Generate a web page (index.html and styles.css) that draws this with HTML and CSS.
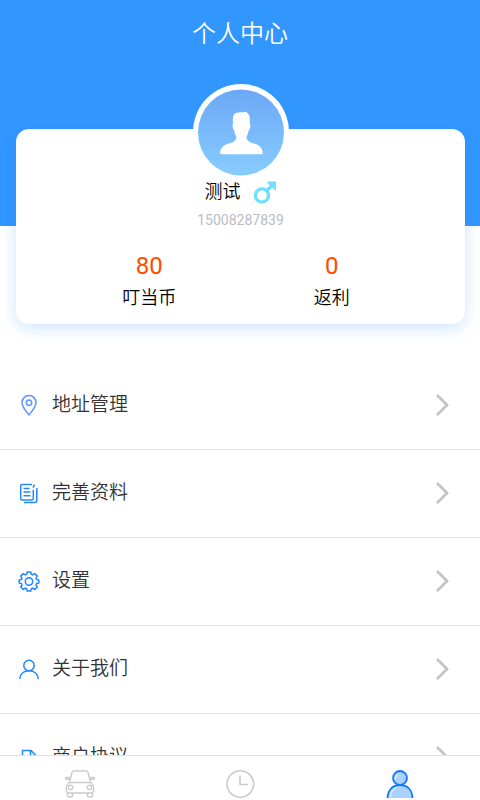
FILE: index.html
```html
<!DOCTYPE html>
<html lang="zh-CN">
<head>
<meta charset="utf-8">
<meta name="viewport" content="width=device-width, initial-scale=1">
<title>个人中心</title>
<link rel="stylesheet" href="styles.css">
</head>
<body>
<main class="content">
  <header class="banner"><h1 class="title">个人中心</h1></header>
  <section class="card">
    <svg class="avatar" viewBox="0 0 96 96" role="img" aria-label="头像">
      <defs><linearGradient id="sky" x1="0" y1="0" x2="0" y2="1"><stop offset="0" stop-color="#6ca8f7"/><stop offset="1" stop-color="#87ccff"/></linearGradient></defs>
      <circle cx="48" cy="48" r="48" fill="#fff"/>
      <circle cx="48" cy="48.500" r="43" fill="url(#sky)"/>
      <path fill="#fff" d="M40 34c0-4 3-5.500 7-5.700 2.500-.1 4.500-.2 6-.9l1.300 1.500c2 1.400 2.500 3.500 2.500 6.100v4.500c.6.500.7 1.200.5 2.500-.2 2.300-.6 3.600-1.600 4-.3 2.700-.9 4.800-2.200 6.500v2c1.300 2.800 3.500 4 7.200 5 5.200 1.400 8.700 4 9 9.300.1 1-.4 1.400-1.400 1.400H28.400c-1 0-1.400-.5-1.300-1.400.5-5.300 3.800-7.900 9-9.300 3.700-1 5.900-2.200 7.200-5v-2c-1.300-1.700-1.800-3.800-2.100-6.500-1-.4-1.400-1.700-1.600-4-.2-1.300 0-2 .5-2.500-.3-1.800-.3-3.700-.1-5.500z"/>
    </svg>
    <div class="person">
      <span class="name">测试</span>
      <svg class="gender" viewBox="0 0 24 24" role="img" aria-label="男" fill="none" stroke="#6fdfff" stroke-width="3.400"><circle cx="9" cy="15.500" r="6.600"/><path d="M13.700 10.800L20 4.500"/><path d="M14.500 2h8v8l-3-2.500-2.500-2.500z" fill="#6fdfff" stroke-width="1"/></svg>
    </div>
    <div class="phone">15008287839</div>
    <dl class="stats">
      <div class="stat"><dt>叮当币</dt><dd>80</dd></div>
      <div class="stat"><dt>返利</dt><dd>0</dd></div>
    </dl>
  </section>
  <nav class="menu" aria-label="个人菜单">
    <a class="row" href="#address">
      <svg class="icon" viewBox="0 0 22 22" stroke="#5c95ff"><path d="M11 21C8 17.500 4 13 4 8.600a7 7 0 0 1 14 0C18 13 14 17.500 11 21z"/><circle cx="11" cy="8.700" r="2.700"/></svg>
      <span class="label">地址管理</span>
      <svg class="arrow" viewBox="0 0 14 22"><path d="M2 1l10 10L2 21"/></svg>
    </a>
    <a class="row" href="#profile">
      <svg class="icon" viewBox="0 0 22 22" stroke="#2386ff"><path d="M14 2.500H4.200a1.500 1.500 0 0 0-1.500 1.500v12.500A1.500 1.500 0 0 0 4.200 18h9.600a1.500 1.500 0 0 0 1.500-1.500V8M5.500 6.500h6M5.500 10h7M5.500 13.700h7M16.500 2.700l-1.500 3M18.800 6v12.500c0 1.200-.7 2-2 2H6"/></svg>
      <span class="label">完善资料</span>
      <svg class="arrow" viewBox="0 0 14 22"><path d="M2 1l10 10L2 21"/></svg>
    </a>
    <a class="row" href="#settings">
      <svg class="icon" viewBox="0 0 22 22" stroke="#2386ff"><path d="M8.700 4.300L9.200 2h3.600l.5 2.300 1.500.6 2-1.300 2.500 2.500-1.300 2 .6 1.400 2.200.5v3l-2.200.5-.6 1.500 1.300 2-2.500 2.500-2-1.300-1.500.6-.5 2.200H9.200l-.5-2.200-1.500-.6-2 1.300L2.700 17 4 15l-.6-1.500-2.200-.5v-3l2.200-.5L4 8.100l-1.300-2 2.500-2.500 2 1.300z" stroke-linejoin="round"/><circle cx="11" cy="11.500" r="3.700"/></svg>
      <span class="label">设置</span>
      <svg class="arrow" viewBox="0 0 14 22"><path d="M2 1l10 10L2 21"/></svg>
    </a>
    <a class="row" href="#about">
      <svg class="icon" viewBox="0 0 22 22" stroke="#2386ff"><circle cx="11" cy="7.500" r="5.200"/><path d="M1.700 20.800c.7-4.900 4.300-8.100 9.300-8.100s8.600 3.200 9.300 8.100"/></svg>
      <span class="label">关于我们</span>
      <svg class="arrow" viewBox="0 0 14 22"><path d="M2 1l10 10L2 21"/></svg>
    </a>
    <a class="row" href="#agreement">
      <svg class="icon" viewBox="0 0 22 22" stroke="#2386ff"><path d="M4.500 4.500H13l4.500 4.500v12h-13zM12.500 4.500v5h5"/></svg>
      <span class="label">商户协议</span>
      <svg class="arrow" viewBox="0 0 14 22"><path d="M2 1l10 10L2 21"/></svg>
    </a>
  </nav>
</main>
<nav class="tabs" aria-label="主导航">
  <a class="tab" href="#car" aria-label="用车">
    <svg class="tab-icon" viewBox="0 0 32 32" fill="none" stroke="#cbcbcb" stroke-width="1.400"><path d="M5.500 14L8 4.500c.3-1 .9-1.500 2-1.500h12c1.100 0 1.700.5 2 1.500l2.500 9.500M5.500 14.500h21c2.300 1.200 3.200 3.500 3.200 6.500 0 2.500-.7 4-2.200 4h-23c-1.500 0-2.200-1.500-2.200-4 0-3 .9-5.300 3.200-6.500zM6 9.500H2.500c-1 0-1 1.800 0 1.800h3M26 9.500h3.500c1 0 1 1.800 0 1.800h-3M3.500 25v2.500c0 1 .4 1.500 1.300 1.500h2.400c.9 0 1.300-.5 1.300-1.500V25M23.500 25v2.500c0 1 .4 1.500 1.300 1.500h2.400c.9 0 1.300-.5 1.300-1.500V25"/><circle cx="6.500" cy="19.300" r="2.200"/><circle cx="25.500" cy="19.300" r="2.200"/></svg>
  </a>
  <a class="tab" href="#orders" aria-label="订单">
    <svg class="tab-icon" viewBox="0 0 32 32" fill="none" stroke="#cbcbcb" stroke-width="1.600"><circle cx="16.300" cy="16" r="13.300"/><path d="M16 7.500v9h8"/></svg>
  </a>
  <a class="tab" href="#me" aria-label="我的" aria-current="page">
    <svg class="tab-icon" viewBox="0 0 32 32" fill="#abd2ff" stroke="#117aff" stroke-width="1.800"><path d="M3.500 30c.3-8 5-13 12.500-13s12.200 5 12.500 13"/><circle cx="16" cy="10" r="7"/><path d="M6.500 29c.3-5 2.500-8 6-9.500M11.500 11c0-2.500 1.200-4 3-4.500" fill="none" stroke="#fff" stroke-width="1"/></svg>
  </a>
</nav>
</body>
</html>
```
FILE: styles.css
```css
* {
  box-sizing: border-box;
}

body {
  margin: 0;
  height: 100vh;
  display: flex;
  flex-direction: column;
  background: #fff;
  color: #000;
  font-family: Roboto, "Noto Sans CJK SC", sans-serif;
}

a {
  color: inherit;
  text-decoration: none;
}

.content {
  flex: 1;
  min-height: 0;
  overflow-y: auto;
  scrollbar-width: none;
}

.banner {
  height: 226px;
  padding-top: 16px;
  background: #3296ff;
}

.title {
  margin: 0;
  color: #fff;
  font-size: 24px;
  font-weight: 350;
  line-height: 36px;
  text-align: center;
}

.card {
  display: flex;
  flex-direction: column;
  align-items: center;
  height: 195px;
  margin: -97px 15px 38px 16px;
  border-radius: 13px;
  background: #fff;
  box-shadow: 0 4px 16px rgba(30, 130, 255, 0.22);
}

.avatar {
  flex: none;
  width: 96px;
  height: 96px;
  margin-top: -45px;
}

.person {
  display: flex;
  align-items: center;
  gap: 12px;
  height: 24px;
}

.name {
  font-size: 18px;
  font-weight: 350;
  line-height: 24px;
}

.gender {
  width: 24px;
  height: 24px;
}

.phone {
  margin-top: 8px;
  color: #b8bcc4;
  font-size: 14px;
  line-height: 16px;
}

.stats {
  display: flex;
  align-self: stretch;
  margin: 24px 42px 0;
}

.stat {
  flex: 1;
  display: flex;
  flex-direction: column-reverse;
  align-items: center;
  gap: 4px;
}

.stat dt {
  font-size: 18px;
  font-weight: 350;
  line-height: 28px;
}

.stat dd {
  margin: 0;
  color: #ff4a00;
  font-size: 24px;
  line-height: 28px;
}

.row {
  display: flex;
  align-items: center;
  height: 88px;
  padding: 0 31px 2px 18px;
  border-bottom: 1px solid #e2e2e2;
}

.icon {
  width: 22px;
  height: 22px;
  fill: none;
  stroke-width: 1.5;
}

.label {
  flex: 1;
  margin-left: 12px;
  color: #333;
  font-size: 19px;
  font-weight: 350;
  line-height: 28px;
}

.arrow {
  width: 14px;
  height: 22px;
  fill: none;
  stroke: #c4c4c4;
  stroke-width: 2.8;
}

.tabs {
  flex: none;
  display: flex;
  height: 45px;
  border-top: 1px solid #e2e2e2;
  background: #fff;
}

.tab {
  flex: 1;
  display: flex;
  align-items: center;
  justify-content: center;
  padding-top: 12px;
}

.tab-icon {
  width: 32px;
  height: 32px;
}
```
